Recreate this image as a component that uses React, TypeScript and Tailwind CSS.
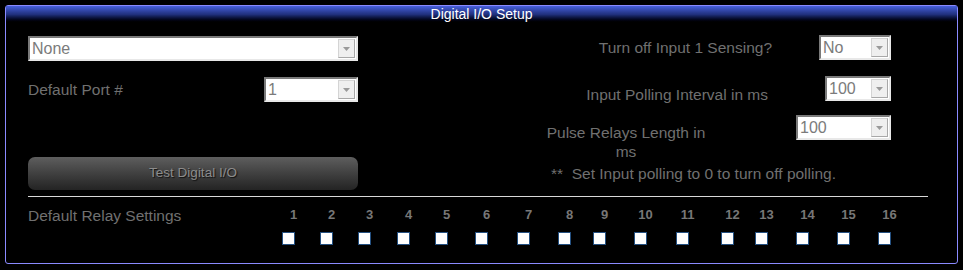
import React from "react";

const relayCols = [38, 38, 39, 38, 40, 42, 41, 35, 41, 42, 45, 34, 41, 41, 41, 23];

function FakeSelect({ value, width }: { value: string; width: string }) {
  return (
    <div
      className={`${width} h-[25px] bg-white flex items-stretch border-2 border-t-[#7a7a7a] border-l-[#7a7a7a] border-r-[#e8e8e8] border-b-[#e8e8e8]`}
    >
      <span className="flex-1 pl-[2px] text-[16px] leading-[21px] text-[#7b7b7b] truncate">
        {value}
      </span>
      <span className="w-[17px] my-[1px] mr-[1px] bg-[#efefef] border border-[#d4d4d4] border-r-[#a8a8a8] border-b-[#a8a8a8] flex items-center justify-center">
        <svg width="7" height="4" viewBox="0 0 7 4">
          <path d="M0 0h7L3.5 4z" fill="#9a9a9a" />
        </svg>
      </span>
    </div>
  );
}

export default function App() {
  return (
    <div className="w-[963px] h-[270px] bg-black pt-[5px] pl-[5px] font-['Liberation_Sans',Arial,sans-serif]">
      <div className="w-[953px] h-[259px] border border-[#8a8aff] rounded-[3px] flex flex-col">
        {/* Title */}
        <div className="h-[17px] bg-linear-to-b from-[#4760dc] via-[#20307c] to-black text-white text-[14px] leading-[16px] text-center">
          Digital I/O Setup
        </div>

        <div className="flex pl-[22px] pt-[13px]">
          {/* Left column */}
          <div className="w-[330px] flex flex-col">
            <FakeSelect value="None" width="w-[330px]" />
            <div className="mt-[16px] flex items-center justify-between">
              <span className="text-[15.5px] text-[#707070]">Default Port #</span>
              <FakeSelect value="1" width="w-[94px]" />
            </div>
            <button className="mt-[55px] h-[33px] rounded-[7px] bg-linear-to-b from-[#5e5e5e] to-[#242424] text-[13.5px] text-[#8c8c8c] [text-shadow:1px_1px_1px_#111]">
              Test Digital I/O
            </button>
          </div>

          {/* Right column */}
          <div className="w-[533px] flex flex-col">
            <div className="-mt-[1px] flex items-center justify-end">
              <span className="text-[15.5px] text-[#707070]">Turn off Input 1 Sensing?</span>
              <div className="ml-[47px]">
                <FakeSelect value="No" width="w-[72px]" />
              </div>
            </div>
            <div className="mt-[16px] flex items-start justify-end">
              <span className="text-[15.5px] leading-[18px] text-[#707070] mt-[10px]">
                Input Polling Interval in ms
              </span>
              <div className="ml-[57px]">
                <FakeSelect value="100" width="w-[66px]" />
              </div>
            </div>
            <div className="mt-[11px] flex items-start justify-end">
              <span className="w-[162px] text-center text-[15.5px] leading-[19px] text-[#707070] mt-[8px]">
                Pulse Relays Length in ms
              </span>
              <div className="ml-[89px]">
                <FakeSelect value="100" width="w-[95px]" />
              </div>
            </div>
            <div className="mt-[3px] flex justify-end pr-[55px]">
              <span className="text-[15.5px] leading-[19px] text-[#707070]">
                **&nbsp; Set Input polling to 0 to turn off polling.
              </span>
            </div>
          </div>
        </div>

        <div className="ml-[22px] w-[900px] mt-[6px] h-px bg-[#d8d8d8]" />

        {/* Relay settings */}
        <div className="flex pl-[22px] mt-[10px]">
          <span className="w-[254px] text-[15.5px] leading-[18px] text-[#707070]">Default Relay Settings</span>
          {relayCols.map((w, i) => (
            <div key={i} className="flex flex-col" style={{ width: w }}>
              <span className="w-[23px] text-center text-[13px] leading-[16px] font-bold text-[#777]">
                {i + 1}
              </span>
              <input
                type="checkbox"
                className="mt-[9px] appearance-none w-[13px] h-[13px] bg-white border border-[#245081]"
              />
            </div>
          ))}
        </div>
      </div>
    </div>
  );
}
